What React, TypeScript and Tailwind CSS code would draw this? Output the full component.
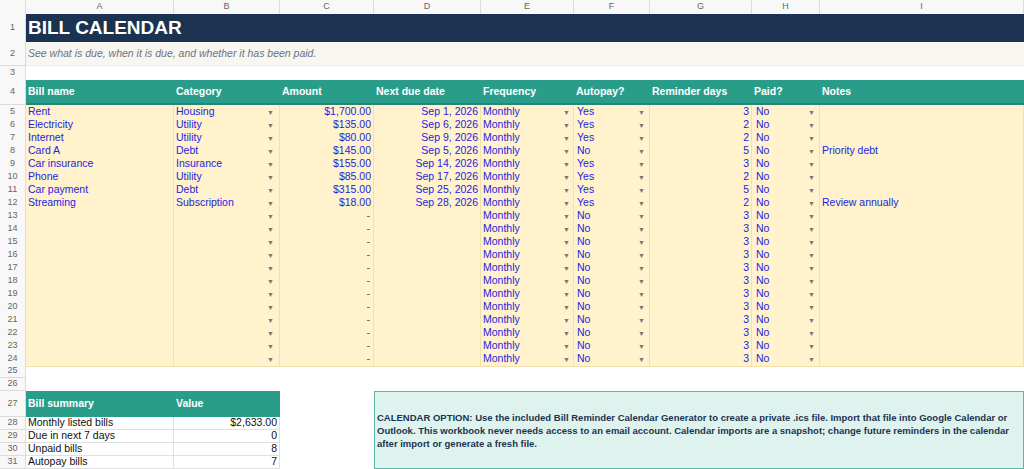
const COLS = 'grid grid-cols-[26px_148px_106px_94px_107px_93px_76px_102px_68px_1fr]';

type Bill = { name: string; cat: string; amt: string; date: string; auto: string; rem: string; notes: string };

const bills: Bill[] = [
  { name: 'Rent', cat: 'Housing', amt: '$1,700.00', date: 'Sep 1, 2026', auto: 'Yes', rem: '3', notes: '' },
  { name: 'Electricity', cat: 'Utility', amt: '$135.00', date: 'Sep 6, 2026', auto: 'Yes', rem: '2', notes: '' },
  { name: 'Internet', cat: 'Utility', amt: '$80.00', date: 'Sep 9, 2026', auto: 'Yes', rem: '2', notes: '' },
  { name: 'Card A', cat: 'Debt', amt: '$145.00', date: 'Sep 5, 2026', auto: 'No', rem: '5', notes: 'Priority debt' },
  { name: 'Car insurance', cat: 'Insurance', amt: '$155.00', date: 'Sep 14, 2026', auto: 'Yes', rem: '3', notes: '' },
  { name: 'Phone', cat: 'Utility', amt: '$85.00', date: 'Sep 17, 2026', auto: 'Yes', rem: '2', notes: '' },
  { name: 'Car payment', cat: 'Debt', amt: '$315.00', date: 'Sep 25, 2026', auto: 'Yes', rem: '5', notes: '' },
  { name: 'Streaming', cat: 'Subscription', amt: '$18.00', date: 'Sep 28, 2026', auto: 'Yes', rem: '2', notes: 'Review annually' },
];
const empty: Bill = { name: '', cat: '', amt: '', date: '', auto: 'No', rem: '3', notes: '' };
const rows = [...bills, ...Array.from({ length: 12 }, () => empty)];

const Arrow = () => <span className="text-[7px] text-[#777] leading-none">▼</span>;

function RowNum({ n }: { n: number }) {
  return (
    <div className="flex items-center justify-center bg-[#f8f8f8] text-[9px] text-[#666] border-r border-b border-[#dcdcdc]">
      {n}
    </div>
  );
}

const cell = 'border-r border-b border-[#f0e2b0] flex items-center px-[2px] overflow-hidden whitespace-nowrap';

export default function App() {
  return (
    <div className="w-[1024px] h-[469px] overflow-hidden bg-white text-[10.5px]" style={{ fontFamily: '"Liberation Sans", Arial, sans-serif' }}>
      {/* column headers */}
      <div className={`${COLS} h-[14px] bg-[#f8f8f8] text-[9px] text-[#666]`}>
        {['', 'A', 'B', 'C', 'D', 'E', 'F', 'G', 'H', 'I'].map((c, i) => (
          <div key={i} className="flex items-center justify-center border-r border-b border-[#dcdcdc]">{c}</div>
        ))}
      </div>

      {/* title */}
      <div className={`${COLS} h-[28px]`}>
        <RowNum n={1} />
        <div className="col-span-9 bg-[#1b3350] text-white font-bold text-[19px] flex items-center px-[2px]">BILL CALENDAR</div>
      </div>
      <div className={`${COLS} h-[24px]`}>
        <RowNum n={2} />
        <div className="col-span-9 bg-[#f8f6f0] text-[#6b7280] italic text-[10.5px] flex items-center px-[2px] border-b border-[#ececec]">
          See what is due, when it is due, and whether it has been paid.
        </div>
      </div>
      <div className={`${COLS} h-[14px]`}>
        <RowNum n={3} />
        <div className="col-span-9 border-b border-[#ececec]" />
      </div>

      {/* table header */}
      <div className={`${COLS} h-[25px]`}>
        <RowNum n={4} />
        {['Bill name', 'Category', 'Amount', 'Next due date', 'Frequency', 'Autopay?', 'Reminder days', 'Paid?', 'Notes'].map((h, i) => (
          <div key={h} className={`bg-[#2a9d8a] text-white font-bold flex items-center border-b-2 border-[#23887a] ${i === 2 ? 'pl-[2px]' : i === 3 || i === 7 ? 'pl-[2px]' : 'px-[2px]'}`}>
            {h}
          </div>
        ))}
      </div>

      {rows.map((r, i) => (
        <div key={i} className={`${COLS} h-[13px] text-[#2323e0]`}>
          <RowNum n={i + 5} />
          <div className={`${cell} bg-[#fff2cc]`}>{r.name}</div>
          <div className={`${cell} bg-[#fff2cc] justify-between`}>
            <span>{r.cat}</span>
            <span className="pr-[3px]"><Arrow /></span>
          </div>
          <div className={`${cell} bg-[#fff2cc] justify-end`}>{r.amt || <span className="text-[#555] pr-[1px]">-</span>}</div>
          <div className={`${cell} bg-[#fff2cc] justify-end`}>{r.date}</div>
          <div className={`${cell} bg-[#fff2cc] justify-between`}>
            <span>Monthly</span>
            <span className="pr-[1px]"><Arrow /></span>
          </div>
          <div className={`${cell} bg-[#fff2cc] justify-between`}>
            <span className="pl-[1px]">{r.auto}</span>
            <span className="pr-[2px]"><Arrow /></span>
          </div>
          <div className={`${cell} bg-[#fff2cc] justify-end`}>{r.rem}</div>
          <div className={`${cell} bg-[#fff2cc] justify-between`}>
            <span className="pl-[2px]">No</span>
            <span className="pr-[2px]"><Arrow /></span>
          </div>
          <div className={`${cell} bg-[#fff2cc]`}>{r.notes}</div>
        </div>
      ))}

      {/* lower section */}
      <div className={`${COLS} grid-rows-[13px_13px_26px_13px_13px_13px_13px]`}>
        {[25, 26, 27, 28, 29, 30, 31].map((n, i) => (
          <div key={n} className="col-start-1" style={{ gridRowStart: i + 1 }}>
            <div className="h-full"><RowNumFill n={n} /></div>
          </div>
        ))}
        <div className="col-start-2 row-start-3 bg-[#2a9d8a] text-white font-bold flex items-center px-[2px]">Bill summary</div>
        <div className="col-start-3 row-start-3 bg-[#2a9d8a] text-white font-bold flex items-center px-[2px]">Value</div>
        {[
          ['Monthly listed bills', '$2,633.00'],
          ['Due in next 7 days', '0'],
          ['Unpaid bills', '8'],
          ['Autopay bills', '7'],
        ].map(([k, v], i) => (
          <div key={k} className="contents">
            <div className="col-start-2 flex items-center px-[2px] border-r border-b border-[#e0e0e0] text-[#111]" style={{ gridRowStart: i + 4 }}>{k}</div>
            <div className="col-start-3 flex items-center justify-end px-[2px] border-r border-b border-[#e0e0e0] text-[#111]" style={{ gridRowStart: i + 4 }}>{v}</div>
          </div>
        ))}
        <div className="col-start-5 col-end-11 row-start-3 row-end-8 bg-[#dff3ee] border border-[#5fb7a6] flex items-center px-[2px] text-[#1b3350] font-bold text-[9.5px] leading-[13px]">
          CALENDAR OPTION: Use the included Bill Reminder Calendar Generator to create a private .ics file. Import that file into Google Calendar or Outlook. This workbook never needs access to an email account. Calendar imports are a snapshot; change future reminders in the calendar after import or generate a fresh file.
        </div>
      </div>
    </div>
  );
}

function RowNumFill({ n }: { n: number }) {
  return (
    <div className="h-full flex items-center justify-center bg-[#f8f8f8] text-[9px] text-[#666] border-r border-b border-[#dcdcdc]">
      {n}
    </div>
  );
}
